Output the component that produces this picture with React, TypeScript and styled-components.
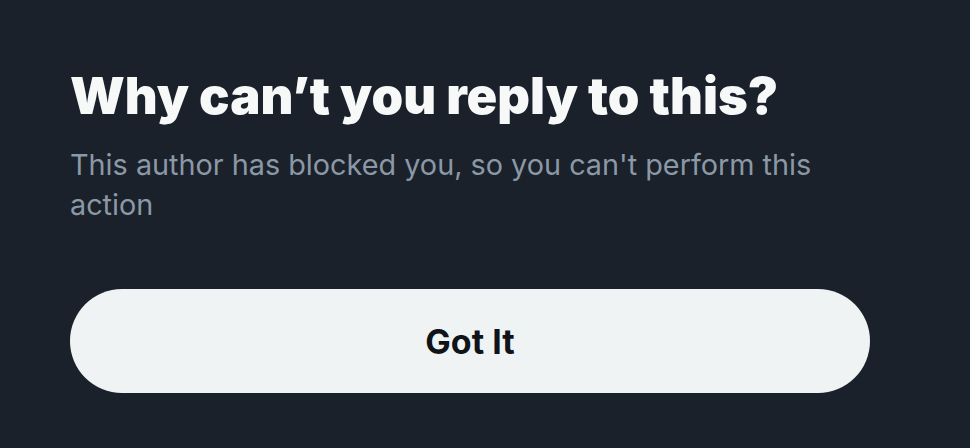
import React from "react";
import styled, { createGlobalStyle } from "styled-components";

const Global = createGlobalStyle`
  html, body { margin: 0; padding: 0; background: #1a212b; }
  body { font-family: Inter, "Noto Sans", sans-serif; }
`;

const Page = styled.div`
  width: 970px;
  height: 448px;
  box-sizing: border-box;
  padding: 64px 100px 0 70px;
  display: flex;
  flex-direction: column;
  background: #1a212b;
`;

const Title = styled.h1`
  margin: 0;
  font-size: 50.7px;
  line-height: 64px;
  font-weight: 900;
  color: #f7f9f9;
  letter-spacing: 0;
`;

const Subtitle = styled.p`
  margin: 17px 0 0;
  font-size: 28.8px;
  line-height: 40px;
  font-weight: 400;
  color: #8b98a5;
  max-width: 780px;
`;

const Button = styled.button`
  margin-top: 64px;
  width: 800px;
  height: 104px;
  border: none;
  border-radius: 52px;
  background: #eff3f4;
  color: #0f1419;
  font-family: Inter, sans-serif;
  font-size: 34px;
  font-weight: 700;
  cursor: pointer;
`;

export default function App() {
  return (
    <>
      <Global />
      <Page>
        <Title>Why can’t you reply to this?</Title>
        <Subtitle>This author has blocked you, so you can't perform this action</Subtitle>
        <Button>Got It</Button>
      </Page>
    </>
  );
}
